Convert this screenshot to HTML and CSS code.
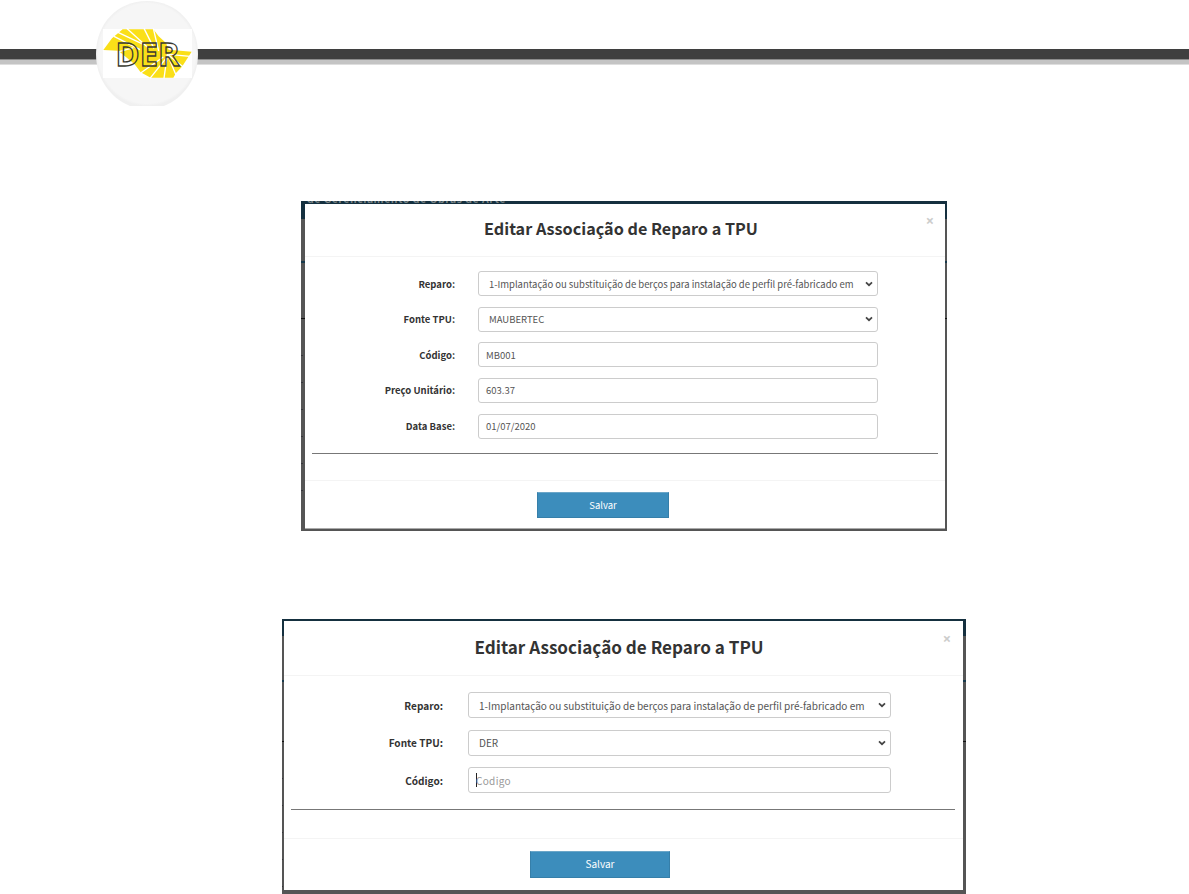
FILE: index.html
```html
<!DOCTYPE html>
<html lang="pt-BR">
<head>
<meta charset="utf-8">
<title>Editar Associação de Reparo a TPU</title>
<link rel="stylesheet" href="styles.css">
</head>
<body>
<header class="masthead">
  <svg class="logo" viewBox="0 0 108 106" role="img" aria-label="DER">
    <defs>
      <radialGradient id="disc"><stop offset="0" stop-color="#f6f6f6"/><stop offset=".95" stop-color="#f6f6f6"/><stop offset="1" stop-color="#f0f0f0"/></radialGradient>
    </defs>
    <path d="M4 54C4 23 26 1 55 1s51 22 51 53c0 24-14 44-34 52H38C18 98 4 78 4 54Z" fill="url(#disc)"/>
    <rect x="11" y="29" width="89" height="49" fill="#fff"/>
    <g transform="translate(-2 15) scale(.3333)">
      <path d="M40 105 66 70 98 43H190L206 64 228 84 236 104 305 110 276 155 258 174 250 188H182L152 172 134 148 85 107Z" fill="#fadf18"/>
      <path d="M72 64 150 104M84 52 160 88M110 40 176 100M162 40 192 100M190 40 206 108M300 124 236 118M280 156 232 118M258 180 232 118M222 190 232 118M180 190 228 130M152 174 220 126M80 112 130 98" fill="none" stroke="#fff" stroke-width="4"/>
    </g>
    <text class="logo-text" x="23.5" y="65.5" textLength="64" lengthAdjust="spacingAndGlyphs">DER</text>
  </svg>
</header>
<main>
  <section class="shot shot-full">
    <span class="behind">de Gerenciamento de Obras de Arte</span>
    <i class="edge edge-left"></i>
    <div class="dialog">
      <div class="head"><h2>Editar Associação de Reparo a TPU</h2><span class="close">×</span></div>
      <form>
        <div class="row"><label>Reparo:</label><div class="field select"><span class="long">1-Implantação ou substituição de berços para instalação de perfil pré-fabricado em</span><svg class="chev" viewBox="0 0 8 6"><path d="M1 1.3 4 4.2 7 1.3"/></svg></div></div>
        <div class="row"><label>Fonte TPU:</label><div class="field select"><span>MAUBERTEC</span><svg class="chev" viewBox="0 0 8 6"><path d="M1 1.3 4 4.2 7 1.3"/></svg></div></div>
        <div class="row"><label>Código:</label><div class="field"><span>MB001</span></div></div>
        <div class="row"><label>Preço Unitário:</label><div class="field"><span>603.37</span></div></div>
        <div class="row"><label>Data Base:</label><div class="field"><span>01/07/2020</span></div></div>
      </form>
      <hr>
      <div class="foot"><button type="button">Salvar</button></div>
    </div>
    <i class="edge edge-right"></i>
  </section>
  <section class="shot shot-short">
    <i class="edge edge-left"></i>
    <div class="dialog">
      <div class="head"><h2>Editar Associação de Reparo a TPU</h2><span class="close">×</span></div>
      <form>
        <div class="row"><label>Reparo:</label><div class="field select"><span class="long">1-Implantação ou substituição de berços para instalação de perfil pré-fabricado em</span><svg class="chev" viewBox="0 0 8 6"><path d="M1 1.3 4 4.2 7 1.3"/></svg></div></div>
        <div class="row"><label>Fonte TPU:</label><div class="field select"><span>DER</span><svg class="chev" viewBox="0 0 8 6"><path d="M1 1.3 4 4.2 7 1.3"/></svg></div></div>
        <div class="row"><label>Código:</label><div class="field focus"><span>Codigo</span></div></div>
      </form>
      <hr>
      <div class="foot"><button type="button">Salvar</button></div>
    </div>
    <i class="edge edge-right"></i>
  </section>
</main>
</body>
</html>
```

FILE: styles.css
```css
* { box-sizing: border-box; }
body {
  margin: 0;
  height: 894px;
  overflow: hidden;
  background: #fff;
  color: #333;
  font-family: "Noto Sans CJK SC", "Noto Sans CJK JP", "Noto Sans", sans-serif;
}
.masthead {
  height: 201px;
  padding-left: 92px;
  background: linear-gradient(#fff 49px, #3f3f3f 49px, #3f3f3f 59px, #8c8c8c 59px, #8c8c8c 60px, #c4c4c4 60px, #c4c4c4 64px, #dedede 64px, #dedede 65px, #fff 65px);
}
.logo { display: block; width: 108px; height: 106px; }
.logo-text {
  font: bold 33px "Open Sans", "Liberation Sans", sans-serif;
  fill: none;
  stroke: #3a3a30;
  stroke-width: 1.3;
}

.shot { position: relative; display: flex; overflow: hidden; }
.shot-full {
  --title: 16.2px; --text: 9.5px; --fh: 25px; --gap: 10.65px; --label: 150px; --col: 23px; --fw: 400px;
  width: 646px; height: 330px; margin-left: 301px; padding: 3px 0 2px;
  background: linear-gradient(#15303f 18px, #555 18px);
}
.shot-short {
  --title: 17.1px; --text: 10.05px; --fh: 26px; --gap: 11.6px; --label: 159px; --col: 25px; --fw: 423px;
  width: 684px; height: 275px; margin: 88px 0 0 282px; padding: 2px 0 4px;
  background: linear-gradient(#15303f 17px, #555 17px);
}
.behind {
  position: absolute; left: 6px; top: -9px;
  font-size: 10.5px; font-weight: 700; line-height: 14px; letter-spacing: .5px; color: #7b8588; white-space: nowrap;
}
.edge {
  background:
    linear-gradient(#17394b, #17394b) 0 57px / 100% 2px no-repeat,
    linear-gradient(#111, #111) 0 114px / 100% 1px no-repeat,
    repeating-linear-gradient(transparent 0 24px, #35353b 24px 25px, transparent 25px 27px) 0 127px / 50% 170px no-repeat;
}
.shot-full .edge-left { width: 4px; }
.shot-full .edge-right { width: 2px; }
.shot-short .edge-left { width: 2px; }
.shot-short .edge-right { width: 3px; }
.edge-right {
  background:
    linear-gradient(#17394b, #17394b) 0 57px / 100% 2px no-repeat,
    linear-gradient(#111, #111) 0 114px / 100% 1px no-repeat;
}
.shot-short .edge { background-position: 0 59px, 0 120px, 0 133px; }
.dialog { position: relative; z-index: 1; flex: 1; background: #fff; }
.shot-full .dialog { border-bottom: 1px solid #aaa; }
.head { display: flex; justify-content: center; border-bottom: 1px solid #f4f4f4; position: relative; }
.shot-full .head { height: 53px; padding: 11px 8px 0 0; }
.shot-short .head { height: 55px; padding: 13px 9px 0 0; }
h2 { margin: 0; font-size: var(--title); line-height: 26px; font-weight: 700; white-space: nowrap; }
.close { position: absolute; right: 11px; top: 9px; font: 700 14.5px/16px "Open Sans", sans-serif; color: #ccc; }
.shot-short .close { right: 12px; top: 10px; }
form { display: flex; flex-direction: column; gap: var(--gap); }
.shot-full form { padding-top: 14px; }
.shot-short form { padding-top: 16px; }
.row { display: flex; align-items: center; height: var(--fh); }
label { width: var(--label); margin-right: var(--col); text-align: right; font-size: var(--text); font-weight: 700; white-space: nowrap; }
.field {
  display: flex; align-items: center; width: var(--fw); height: var(--fh); padding: 0 7px;
  border: 1px solid #ccc; border-radius: 3px; font-size: var(--text); color: #555; white-space: nowrap;
}
.select { justify-content: space-between; padding: 0 4px 0 10px; }
.long { letter-spacing: -.02px; }
.chev { flex: none; width: 8px; height: 6px; fill: none; stroke: #444; stroke-width: 1.7; }
.focus { color: #999; }
.focus span { letter-spacing: .3px; margin-left: -1px; }
.focus::before { content: ""; width: 1px; height: 14px; background: #222; }
hr { height: 1px; border: 0; background: #777; }
.shot-full hr { margin: 14.5px 7px 0; }
.shot-short hr { margin: 16px 8px 0 7px; }
.foot { display: flex; border-top: 1px solid #f4f4f4; }
.shot-full .foot { margin-top: 26px; padding: 11px 0 0 232px; }
.shot-short .foot { margin-top: 28px; padding: 12px 0 0 246px; }
button {
  padding: 0 0 1px; border: 1px solid #367fa9; border-top-color: #6ba6c8; background: #3c8dbc;
  color: #fff; font-family: inherit; font-size: var(--text);
}
.shot-full button { width: 132px; height: 26px; }
.shot-short button { width: 140px; height: 27px; padding-bottom: 2px; }
```
